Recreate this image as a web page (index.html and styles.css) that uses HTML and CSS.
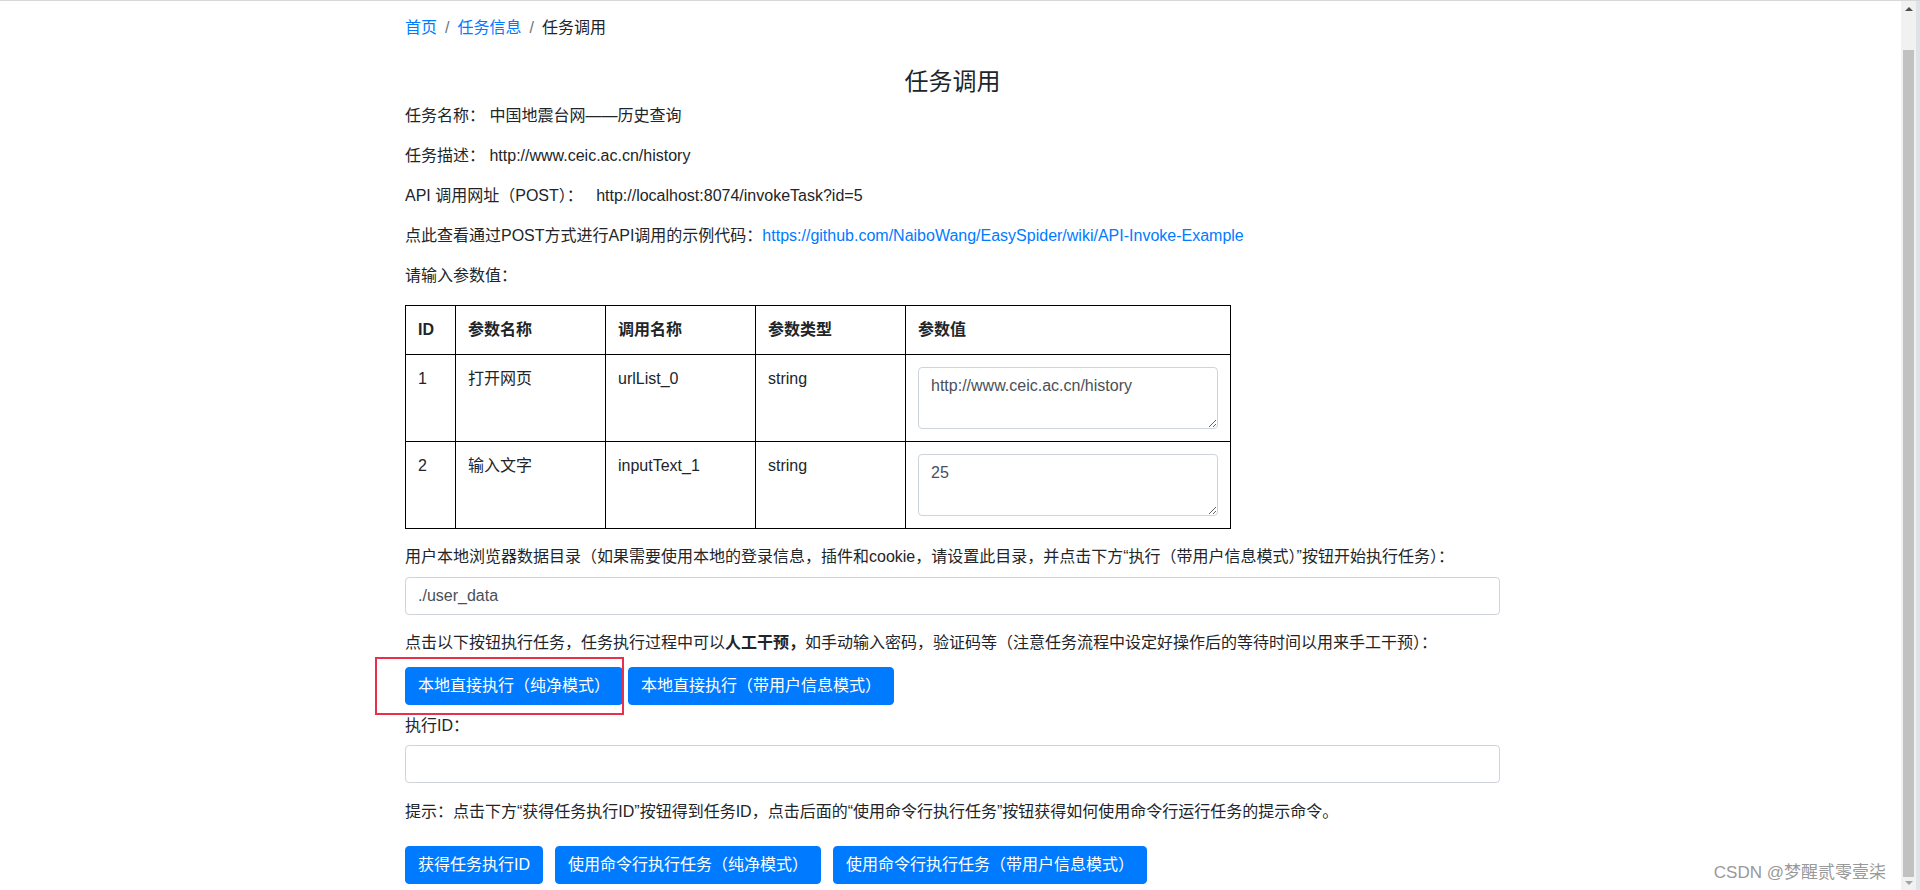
FILE: index.html
```html
<!DOCTYPE html>
<html lang="zh-CN">
<head>
<meta charset="utf-8">
<title>任务调用</title>
<link rel="stylesheet" href="styles.css">
</head>
<body>
<div class="window">
  <div class="viewport">
    <div class="container">
      <ol class="breadcrumb">
        <li><a href="#">首页</a></li>
        <li class="sep">/</li>
        <li><a href="#">任务信息</a></li>
        <li class="sep">/</li>
        <li class="active">任务调用</li>
      </ol>
      <h3 class="title">任务调用</h3>
      <p>任务名称：&nbsp;中国地震台网——历史查询</p>
      <p>任务描述：&nbsp;http://www.ceic.ac.cn/history</p>
      <p>API 调用网址（POST）：&nbsp;&nbsp;&nbsp;http://localhost:8074/invokeTask?id=5</p>
      <p>点此查看通过POST方式进行API调用的示例代码：<a href="#">https://github.com/NaiboWang/EasySpider/wiki/API-Invoke-Example</a></p>
      <p class="prompt">请输入参数值：</p>
      <table class="params">
        <colgroup>
          <col class="c-id">
          <col class="c-name">
          <col class="c-call">
          <col class="c-type">
          <col class="c-value">
        </colgroup>
        <thead>
          <tr><th>ID</th><th>参数名称</th><th>调用名称</th><th>参数类型</th><th>参数值</th></tr>
        </thead>
        <tbody>
          <tr>
            <td>1</td><td>打开网页</td><td>urlList_0</td><td>string</td>
            <td><textarea class="field-area" rows="2">http://www.ceic.ac.cn/history</textarea></td>
          </tr>
          <tr>
            <td>2</td><td>输入文字</td><td>inputText_1</td><td>string</td>
            <td><textarea class="field-area" rows="2">25</textarea></td>
          </tr>
        </tbody>
      </table>
      <label class="label-dir">用户本地浏览器数据目录（如果需要使用本地的登录信息，插件和cookie，请设置此目录，并点击下方“执行（带用户信息模式）”按钮开始执行任务）：</label>
      <input class="field" type="text" value="./user_data">
      <p class="run-hint">点击以下按钮执行任务，任务执行过程中可以<b>人工干预，</b>如手动输入密码，验证码等（注意任务流程中设定好操作后的等待时间以用来手工干预）：</p>
      <div class="btn-row run-row">
        <button class="btn">本地直接执行（纯净模式）</button>
        <button class="btn">本地直接执行（带用户信息模式）</button>
        <div class="highlight"></div>
      </div>
      <label class="label-id">执行ID：</label>
      <input class="field" type="text" value="">
      <p class="tip">提示：点击下方“获得任务执行ID”按钮得到任务ID，点击后面的“使用命令行执行任务”按钮获得如何使用命令行运行任务的提示命令。</p>
      <div class="btn-row cmd-row">
        <button class="btn">获得任务执行ID</button>
        <button class="btn">使用命令行执行任务（纯净模式）</button>
        <button class="btn">使用命令行执行任务（带用户信息模式）</button>
      </div>
    </div>
    <div class="watermark">CSDN @梦醒贰零壹柒</div>
  </div>
  <div class="scrollbar">
    <div class="arrow-up"></div>
    <div class="thumb"></div>
    <div class="arrow-down"></div>
  </div>
  <div class="edge"></div>
</div>
</body>
</html>
```
FILE: styles.css
```css
* {
  box-sizing: border-box;
}

html, body {
  margin: 0;
  padding: 0;
  height: 890px;
  overflow: hidden;
}

body {
  font-family: "Liberation Sans", "Noto Sans CJK SC", sans-serif;
  font-size: 16px;
  line-height: 24px;
  color: #212529;
  background: #fff;
}

a {
  color: #007bff;
  text-decoration: none;
}

.window {
  display: flex;
  height: 890px;
  border-top: 1px solid #d8d8d8;
}

.viewport {
  flex: 1;
  position: relative;
  padding-left: 4px;
}

.container {
  width: 1095px;
  margin: 0 auto;
}

.breadcrumb {
  display: flex;
  list-style: none;
  margin: 15px 0 0;
  padding: 0;
}

.breadcrumb .sep {
  color: #6c757d;
  padding: 0 8px;
}

.breadcrumb .active {
  color: #212529;
}

.title {
  font-size: 24px;
  line-height: 29px;
  font-weight: 400;
  text-align: center;
  margin: 27px 0 8px;
}

p {
  margin: 0 0 16px;
}

.prompt {
  margin-bottom: 17px;
}

.params {
  border-collapse: collapse;
  table-layout: fixed;
  width: 825px;
  border: 1px solid #000;
  margin: 0 0 16px;
}

.c-id { width: 50px; }
.c-name { width: 150px; }
.c-call { width: 150px; }
.c-type { width: 150px; }
.c-value { width: 325px; }

.params th,
.params td {
  border: 1px solid #000;
  padding: 12px;
  text-align: left;
  vertical-align: top;
}

.params th {
  font-weight: 700;
}

.field-area {
  display: block;
  width: 100%;
  height: 62px;
  margin: 0;
  padding: 6px 12px;
  border: 1px solid #ced4da;
  border-radius: 4px;
  font-family: inherit;
  font-size: 16px;
  line-height: 24px;
  color: #495057;
  resize: vertical;
}

.label-dir {
  display: block;
  margin-bottom: 8px;
}

.field {
  display: block;
  width: 100%;
  height: 38px;
  margin: 0;
  padding: 6px 12px;
  border: 1px solid #ced4da;
  border-radius: 4px;
  font-family: inherit;
  font-size: 16px;
  line-height: 24px;
  color: #495057;
  background: #fff;
}

.run-hint {
  margin: 16px 0 12px;
}

.run-hint b {
  font-weight: 700;
}

.btn-row {
  display: flex;
}

.run-row {
  position: relative;
  gap: 5px;
}

.cmd-row {
  gap: 12px;
  margin-top: 22px;
}

.btn {
  height: 38px;
  padding: 6px 12px;
  border: 1px solid #007bff;
  border-radius: 4px;
  background: #007bff;
  color: #fff;
  font-family: inherit;
  font-size: 16px;
  line-height: 24px;
  white-space: nowrap;
}

.highlight {
  position: absolute;
  left: -30px;
  top: -10px;
  width: 249px;
  height: 58px;
  border: 2px solid #e8304c;
  pointer-events: none;
}

.label-id {
  display: block;
  margin: 9px 0 7px;
}

.tip {
  margin: 17px 0 0;
}

.watermark {
  position: absolute;
  right: 15px;
  bottom: 7px;
  font-size: 17px;
  line-height: 20px;
  color: #999;
  text-shadow: 0 0 1px #fff;
}

.scrollbar {
  width: 15px;
  background: #f1f1f1;
  display: flex;
  flex-direction: column;
  align-items: center;
}

.arrow-up {
  margin-top: 6px;
  width: 0;
  height: 0;
  border-left: 4px solid transparent;
  border-right: 4px solid transparent;
  border-bottom: 4px solid #505050;
}

.thumb {
  margin-top: 39px;
  width: 11px;
  height: 827px;
  background: #c1c1c1;
}

.arrow-down {
  margin-top: 4px;
  width: 0;
  height: 0;
  border-left: 4px solid transparent;
  border-right: 4px solid transparent;
  border-top: 4px solid #a3a3a3;
}

.edge {
  width: 4px;
  background: #dfe2e7;
}
```
